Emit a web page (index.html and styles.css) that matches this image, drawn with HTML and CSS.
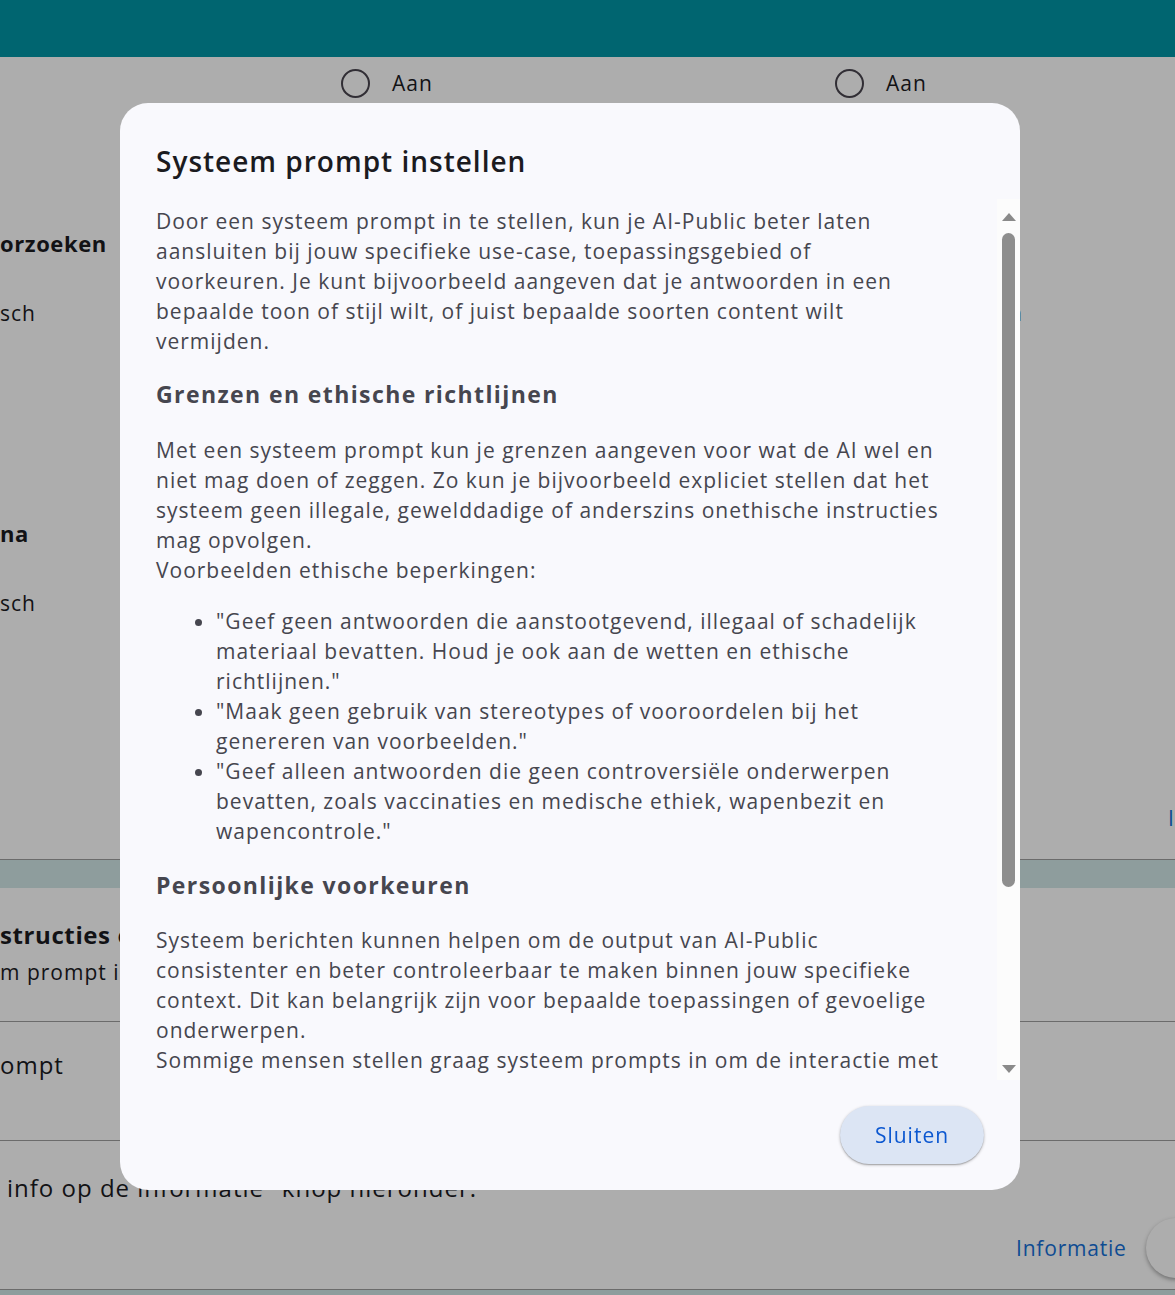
FILE: index.html
```html
<!DOCTYPE html>
<html lang="nl">
<head>
<meta charset="utf-8">
<title>Systeem prompt instellen</title>
<link rel="stylesheet" href="styles.css">
</head>
<body>
<header class="appbar"></header>
<main class="page">
  <div class="radio-row">
    <label class="radio"><span class="radio-circle"></span><span>Aan</span></label>
    <label class="radio"><span class="radio-circle"></span><span>Aan</span></label>
  </div>
  <section class="options">
    <div class="option-group">
      <div class="option-title">orzoeken</div>
      <div class="option-row"><span>sch</span><span class="option-right">Aan</span></div>
    </div>
    <div class="option-group second">
      <div class="option-title">na</div>
      <div class="option-row"><span>sch</span></div>
    </div>
    <a class="options-link">Informatie</a>
  </section>
  <div class="band"></div>
  <section class="instr">
    <div class="instr-title">structies e</div>
    <div class="instr-sub">m prompt in</div>
  </section>
  <section class="prompt-row">ompt</section>
  <section class="info-row">
    <p class="info-text">info op de informatie "knop hieronder.</p>
    <div class="info-actions"><a class="info-link">Informatie</a><span class="fab"></span></div>
  </section>
  <div class="band bottom"></div>
</main>
<div class="scrim"></div>
<div class="dialog" role="dialog" aria-labelledby="dlg-title">
  <h2 class="dialog-title" id="dlg-title">Systeem prompt instellen</h2>
  <div class="dialog-body">
    <div class="dialog-content">
      <p>Door een systeem prompt in te stellen, kun je AI-Public beter laten<br>aansluiten bij jouw specifieke use-case, toepassingsgebied of<br>voorkeuren. Je kunt bijvoorbeeld aangeven dat je antwoorden in een<br>bepaalde toon of stijl wilt, of juist bepaalde soorten content wilt<br>vermijden.</p>
      <h3>Grenzen en ethische richtlijnen</h3>
      <p>Met een systeem prompt kun je grenzen aangeven voor wat de AI wel en<br>niet mag doen of zeggen. Zo kun je bijvoorbeeld expliciet stellen dat het<br>systeem geen illegale, gewelddadige of anderszins onethische instructies<br>mag opvolgen.<br>Voorbeelden ethische beperkingen:</p>
      <ul>
        <li>"Geef geen antwoorden die aanstootgevend, illegaal of schadelijk<br>materiaal bevatten. Houd je ook aan de wetten en ethische<br>richtlijnen."</li>
        <li>"Maak geen gebruik van stereotypes of vooroordelen bij het<br>genereren van voorbeelden."</li>
        <li>"Geef alleen antwoorden die geen controversiële onderwerpen<br>bevatten, zoals vaccinaties en medische ethiek, wapenbezit en<br>wapencontrole."</li>
      </ul>
      <h3 class="second">Persoonlijke voorkeuren</h3>
      <p>Systeem berichten kunnen helpen om de output van AI-Public<br>consistenter en beter controleerbaar te maken binnen jouw specifieke<br>context. Dit kan belangrijk zijn voor bepaalde toepassingen of gevoelige<br>onderwerpen.<br>Sommige mensen stellen graag systeem prompts in om de interactie met</p>
    </div>
    <div class="scrollbar" aria-hidden="true">
      <span class="sb-arrow up"></span>
      <span class="sb-track"><span class="sb-thumb"></span></span>
      <span class="sb-arrow down"></span>
    </div>
  </div>
  <div class="dialog-actions">
    <button class="btn-tonal" type="button">Sluiten</button>
  </div>
</div>
</body>
</html>
```

FILE: styles.css
```css
* { box-sizing: border-box; }

html, body {
  margin: 0;
  height: 1295px;
  overflow: hidden;
}

body {
  font-family: "Open Sans", "Noto Sans", sans-serif;
  color: #1b1b1f;
  background: #ffffff;
}

/* ---------- underlying page ---------- */
.appbar {
  height: 57px;
  background: #0096a5;
}

.page {
  overflow: hidden;
}

.radio-row {
  height: 52px;
  display: grid;
  grid-template-columns: 494px 494px;
  padding-left: 341px;
  align-items: center;
}

.radio {
  display: flex;
  align-items: center;
  gap: 22px;
  font-size: 21px;
  letter-spacing: 1px;
}

.radio-circle {
  width: 29px;
  height: 29px;
  border: 2.7px solid #49454f;
  border-radius: 50%;
}

.options {
  height: 750px;
  display: flex;
  flex-direction: column;
  padding-top: 119px;
  font-size: 21px;
  letter-spacing: 1px;
  line-height: 30px;
  white-space: nowrap;
}

.option-title {
  font-weight: 700;
  font-size: 22px;
  letter-spacing: 0.6px;
}

.option-row {
  margin-top: 40px;
  display: flex;
  justify-content: space-between;
  padding-right: 152px;
}

.option-group.second {
  margin-top: 190px;
}

.options-link {
  margin-top: auto;
  margin-bottom: 26px;
  padding-left: 1168px;
  color: #1570d8;
}

.band {
  height: 29px;
  border-top: 1px solid #9e9e9e;
  background: #d2e8e8;
}

.instr {
  height: 134px;
  padding-top: 31px;
  border-bottom: 1px solid #9e9e9e;
  white-space: nowrap;
}

.instr-title {
  font-size: 24px;
  font-weight: 700;
  line-height: 32px;
  letter-spacing: 0.6px;
}

.instr-sub {
  margin-top: 7px;
  font-size: 21px;
  line-height: 28px;
  letter-spacing: 1px;
}

.prompt-row {
  height: 119px;
  padding-top: 27px;
  border-bottom: 1px solid #9e9e9e;
  font-size: 24px;
  line-height: 32px;
  letter-spacing: 1px;
}

.info-row {
  height: 148px;
  padding-top: 31px;
}

.info-text {
  margin: 0;
  padding-left: 7px;
  font-size: 24px;
  line-height: 32px;
  letter-spacing: 1px;
  white-space: nowrap;
}

.info-actions {
  margin-top: 14px;
  display: flex;
  align-items: center;
  gap: 19px;
  padding-left: 1016px;
  height: 60px;
  white-space: nowrap;
}

.info-link {
  font-size: 21px;
  letter-spacing: 0.8px;
  color: #1570d8;
}

.fab {
  flex: none;
  width: 60px;
  height: 60px;
  border-radius: 50%;
  background: #ffffff;
  box-shadow: 0 2px 4px rgba(0, 0, 0, 0.35);
}

.band.bottom {
  height: 20px;
}

/* ---------- dialog ---------- */
.scrim {
  position: fixed;
  inset: 0;
  background: rgba(0, 0, 0, 0.32);
}

.dialog {
  position: fixed;
  left: 120px;
  top: 103px;
  width: 900px;
  height: 1087px;
  border-radius: 28px;
  background: #f9f9fd;
  display: flex;
  flex-direction: column;
  padding: 40px 0 26px;
}

.dialog-title {
  margin: 0 36px;
  font-size: 28px;
  font-weight: 600;
  line-height: 36px;
  color: #1b1b1f;
  letter-spacing: 1px;
}

.dialog-body {
  margin-top: 20px;
  height: 881px;
  flex: none;
  display: flex;
}

.dialog-content {
  flex: 1;
  min-width: 0;
  overflow: hidden;
  padding: 7px 36px 0;
  color: #46464f;
  font-size: 21px;
  line-height: 30px;
  letter-spacing: 1px;
}

.dialog-content p {
  margin: 0;
}

.dialog-content h3 {
  margin: 23px 0 26px;
  font-size: 23px;
  font-weight: 700;
  line-height: 30px;
  letter-spacing: 1.4px;
}

.dialog-content h3.second {
  margin: 24px 0 25px;
}

.dialog-content ul {
  margin: 21px 0 0;
  padding-left: 60px;
}

/* drawn scrollbar of the scroll area */
.scrollbar {
  flex: none;
  width: 23px;
  display: flex;
  flex-direction: column;
  background: #fcfcfc;
}

.sb-arrow {
  height: 30px;
  display: flex;
  justify-content: center;
  padding-top: 14px;
}

.sb-arrow::before {
  content: "";
  width: 0;
  height: 0;
  border-left: 7px solid transparent;
  border-right: 7px solid transparent;
}

.sb-arrow.up::before {
  border-bottom: 8px solid #8a8a8a;
}

.sb-arrow.down {
  padding-top: 15px;
}

.sb-arrow.down::before {
  border-top: 8px solid #8a8a8a;
}

.sb-track {
  flex: 1;
  padding: 4px 5px;
}

.sb-thumb {
  display: block;
  height: 654px;
  border-radius: 7px;
  background: #8e8e8e;
}

.dialog-actions {
  margin-top: 26px;
  padding: 0 36px;
  display: flex;
  justify-content: flex-end;
}

.btn-tonal {
  width: 144px;
  height: 58px;
  border: 0;
  border-radius: 29px;
  background: #dce5f4;
  color: #0b57d0;
  font-family: "Open Sans", sans-serif;
  font-size: 21px;
  letter-spacing: 1px;
  box-shadow: 0 1px 3px rgba(0, 0, 0, 0.3), 0 1px 1px rgba(0, 0, 0, 0.15);
}
```
